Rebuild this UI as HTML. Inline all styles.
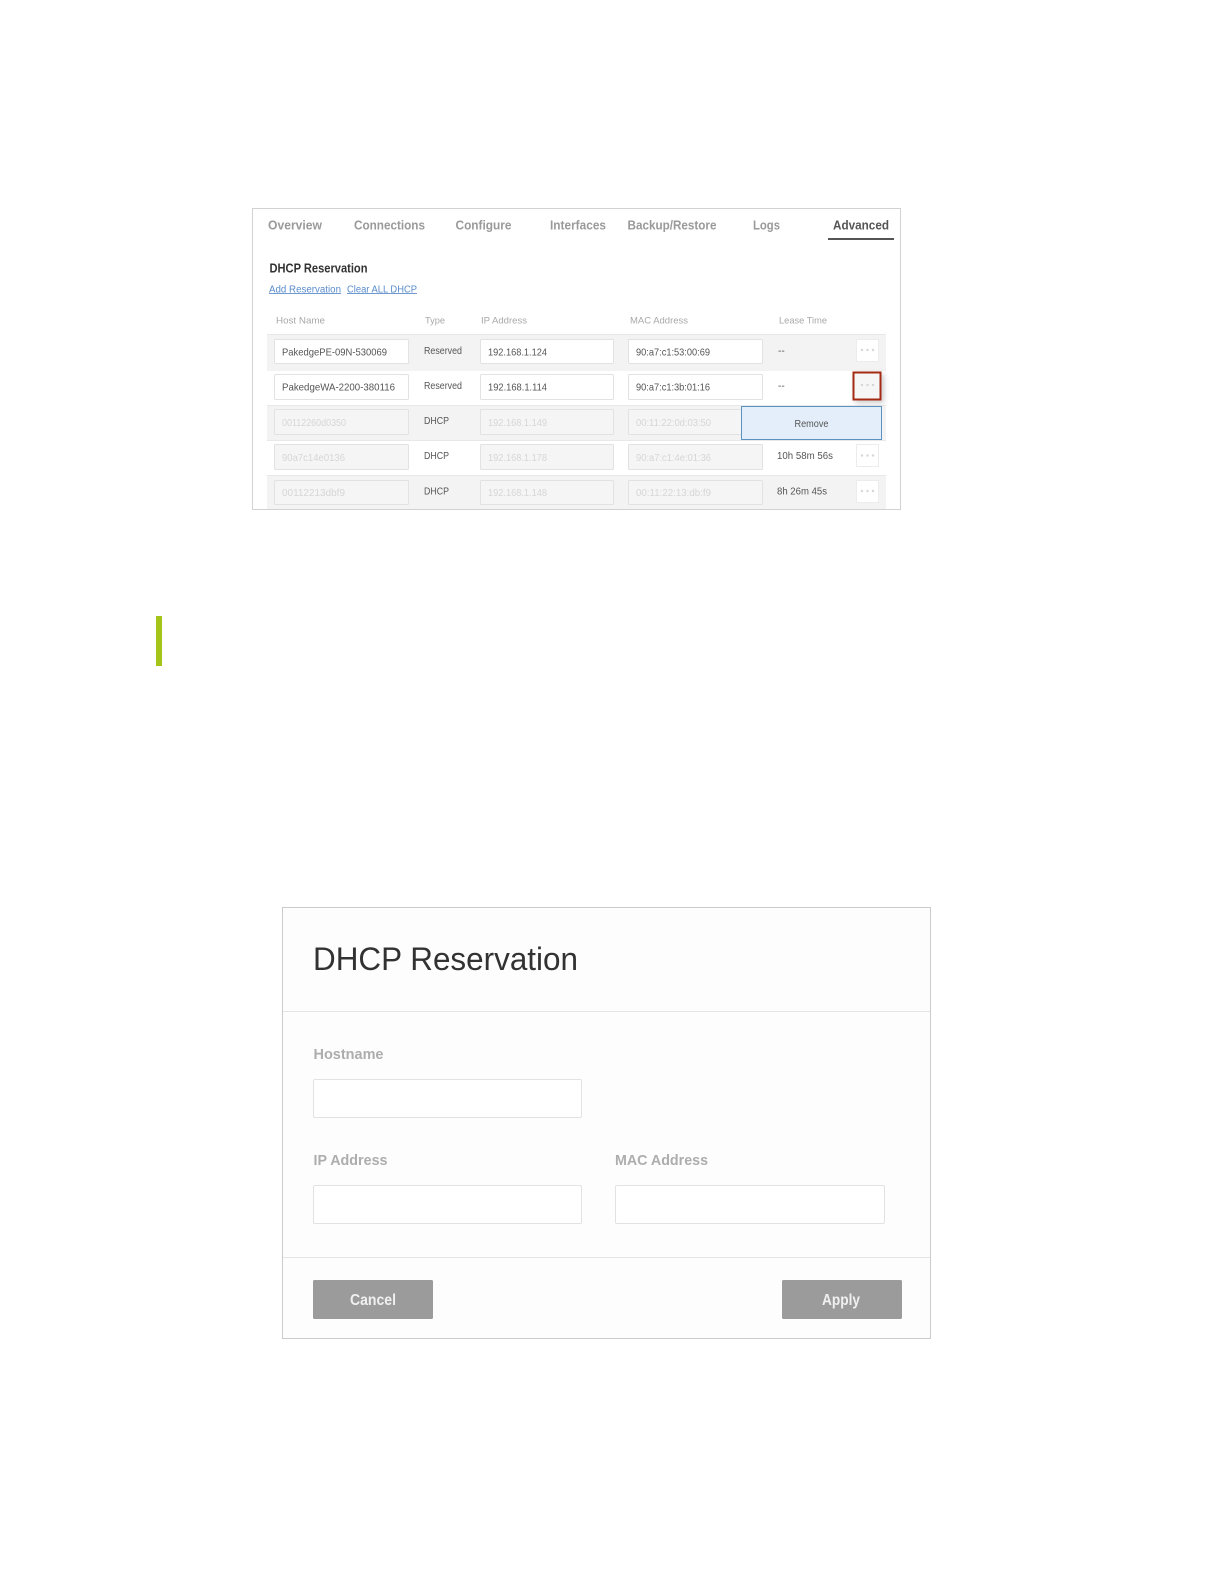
<!DOCTYPE html>
<html><head><meta charset="utf-8"><style>
html,body{margin:0;padding:0;background:#fff;width:1224px;height:1584px;overflow:hidden}
svg{display:block}
text{font-family:"Liberation Sans",sans-serif}
</style></head><body>
<svg width="1224" height="1584" viewBox="0 0 1224 1584" xmlns="http://www.w3.org/2000/svg">
<defs><filter id="s" x="-50%" y="-50%" width="200%" height="200%"><feGaussianBlur stdDeviation="3"/></filter>
<filter id="b" x="-5%" y="-20%" width="110%" height="140%"><feGaussianBlur stdDeviation="0.35"/></filter></defs>
<rect x="252.500" y="208.500" width="648" height="301" fill="#fff" stroke="#d2d2d2"/>
<g font-size="12.500" font-weight="bold" fill="#9a9a9a" filter="url(#b)">
<text x="268" y="229.500" textLength="54" lengthAdjust="spacingAndGlyphs">Overview</text>
<text x="354" y="229.500" textLength="71" lengthAdjust="spacingAndGlyphs">Connections</text>
<text x="455.500" y="229.500" textLength="56" lengthAdjust="spacingAndGlyphs">Configure</text>
<text x="550" y="229.500" textLength="56" lengthAdjust="spacingAndGlyphs">Interfaces</text>
<text x="627.500" y="229.500" textLength="89" lengthAdjust="spacingAndGlyphs">Backup/Restore</text>
<text x="753" y="229.500" textLength="27" lengthAdjust="spacingAndGlyphs">Logs</text>
<text x="833" y="229.500" textLength="56" lengthAdjust="spacingAndGlyphs" fill="#555">Advanced</text>
</g>
<rect x="828" y="238" width="66" height="2" fill="#555"/>
<g filter="url(#b)">
<text x="269.500" y="272.500" font-size="12.500" font-weight="bold" fill="#333" textLength="98" lengthAdjust="spacingAndGlyphs">DHCP Reservation</text>
</g>
<g font-size="10" fill="#5a8ccb" filter="url(#b)">
<text x="269" y="292.500" textLength="72" lengthAdjust="spacingAndGlyphs">Add Reservation</text>
<text x="347" y="292.500" textLength="70" lengthAdjust="spacingAndGlyphs">Clear ALL DHCP</text>
</g>
<rect x="269" y="293" width="72" height="1" fill="#6f9bd2"/>
<rect x="347" y="293" width="70" height="1" fill="#6f9bd2"/>
<g font-size="9.500" fill="#a8a8a8" filter="url(#b)">
<text x="276" y="323.500" textLength="49" lengthAdjust="spacingAndGlyphs">Host Name</text>
<text x="425" y="323.500" textLength="20" lengthAdjust="spacingAndGlyphs">Type</text>
<text x="481" y="323.500" textLength="46" lengthAdjust="spacingAndGlyphs">IP Address</text>
<text x="630" y="323.500" textLength="58" lengthAdjust="spacingAndGlyphs">MAC Address</text>
<text x="779" y="323.500" textLength="48" lengthAdjust="spacingAndGlyphs">Lease Time</text>
</g>
<rect x="267" y="334" width="619" height="37" fill="#f3f3f3"/>
<rect x="267" y="405" width="619" height="36" fill="#f3f3f3"/>
<rect x="267" y="475" width="619" height="34" fill="#f3f3f3"/>
<rect x="267" y="405" width="619" height="1" fill="#e8e8e8"/>
<rect x="267" y="440" width="619" height="1" fill="#e8e8e8"/>
<rect x="267" y="475" width="619" height="1" fill="#e8e8e8"/>
<rect x="267" y="334" width="619" height="1" fill="#e8e8e8"/>
<g fill="#fff" stroke="#e2e2e2">
<rect x="274.500" y="339.500" width="134" height="24" rx="1"/><rect x="480.500" y="339.500" width="133" height="24" rx="1"/><rect x="628.500" y="339.500" width="134" height="24" rx="1"/>
<rect x="274.500" y="374.500" width="134" height="25" rx="1"/><rect x="480.500" y="374.500" width="133" height="25" rx="1"/><rect x="628.500" y="374.500" width="134" height="25" rx="1"/>
</g>
<g fill="#f5f5f5" stroke="#e2e2e2">
<rect x="274.500" y="409.500" width="134" height="25" rx="1"/><rect x="480.500" y="409.500" width="133" height="25" rx="1"/><rect x="628.500" y="409.500" width="134" height="25" rx="1"/>
<rect x="274.500" y="444.500" width="134" height="25" rx="1"/><rect x="480.500" y="444.500" width="133" height="25" rx="1"/><rect x="628.500" y="444.500" width="134" height="25" rx="1"/>
<rect x="274.500" y="480.500" width="134" height="24" rx="1"/><rect x="480.500" y="480.500" width="133" height="24" rx="1"/><rect x="628.500" y="480.500" width="134" height="24" rx="1"/>
</g>
<g font-size="10.500" fill="#555" filter="url(#b)">
<text x="282" y="355.500" textLength="105" lengthAdjust="spacingAndGlyphs">PakedgePE-09N-530069</text>
<text x="282" y="390.500" textLength="113" lengthAdjust="spacingAndGlyphs">PakedgeWA-2200-380116</text>
<text x="488" y="355.500" textLength="59" lengthAdjust="spacingAndGlyphs">192.168.1.124</text>
<text x="488" y="390.500" textLength="59" lengthAdjust="spacingAndGlyphs">192.168.1.114</text>
<text x="636" y="355.500" textLength="74" lengthAdjust="spacingAndGlyphs">90:a7:c1:53:00:69</text>
<text x="636" y="390.500" textLength="74" lengthAdjust="spacingAndGlyphs">90:a7:c1:3b:01:16</text>
</g>
<g font-size="10" fill="#d6d6d6" filter="url(#b)">
<text x="282" y="426" textLength="64" lengthAdjust="spacingAndGlyphs">00112260d0350</text>
<text x="282" y="461" textLength="63" lengthAdjust="spacingAndGlyphs">90a7c14e0136</text>
<text x="282" y="496" textLength="63" lengthAdjust="spacingAndGlyphs">00112213dbf9</text>
<text x="488" y="426" textLength="59" lengthAdjust="spacingAndGlyphs">192.168.1.149</text>
<text x="488" y="461" textLength="59" lengthAdjust="spacingAndGlyphs">192.168.1.178</text>
<text x="488" y="496" textLength="59" lengthAdjust="spacingAndGlyphs">192.168.1.148</text>
<text x="636" y="426" textLength="75" lengthAdjust="spacingAndGlyphs">00:11:22:0d:03:50</text>
<text x="636" y="461" textLength="75" lengthAdjust="spacingAndGlyphs">90:a7:c1:4e:01:36</text>
<text x="636" y="496" textLength="75" lengthAdjust="spacingAndGlyphs">00:11:22:13:db:f9</text>
</g>
<g font-size="10" fill="#555" filter="url(#b)">
<text x="424" y="354" textLength="38" lengthAdjust="spacingAndGlyphs">Reserved</text>
<text x="424" y="389" textLength="38" lengthAdjust="spacingAndGlyphs">Reserved</text>
<text x="424" y="424" textLength="25" lengthAdjust="spacingAndGlyphs">DHCP</text>
<text x="424" y="459" textLength="25" lengthAdjust="spacingAndGlyphs">DHCP</text>
<text x="424" y="494.500" textLength="25" lengthAdjust="spacingAndGlyphs">DHCP</text>
<text x="778" y="354">--</text>
<text x="778" y="389">--</text>
<text x="777" y="459" textLength="56" lengthAdjust="spacingAndGlyphs">10h 58m 56s</text>
<text x="777" y="494.500" textLength="50" lengthAdjust="spacingAndGlyphs">8h 26m 45s</text>
</g>
<g fill="#fff" stroke="#ececec">
<rect x="856.500" y="339.500" width="22" height="22"/>
<rect x="856.500" y="444.500" width="22" height="22"/>
<rect x="856.500" y="480.500" width="22" height="22"/>
</g>
<rect x="855" y="374" width="29" height="29" fill="#000" opacity=".2" filter="url(#s)"/>
<rect x="853.500" y="372.500" width="27" height="27" fill="#f6f6f6" stroke="#a52a14" stroke-width="2"/>
<g fill="#d6d6d6">
<circle cx="862" cy="350" r="1.200"/><circle cx="867.500" cy="350" r="1.200"/><circle cx="873" cy="350" r="1.200"/>
<circle cx="862" cy="385" r="1.200"/><circle cx="867.500" cy="385" r="1.200"/><circle cx="873" cy="385" r="1.200"/>
<circle cx="862" cy="455.500" r="1.200"/><circle cx="867.500" cy="455.500" r="1.200"/><circle cx="873" cy="455.500" r="1.200"/>
<circle cx="862" cy="491" r="1.200"/><circle cx="867.500" cy="491" r="1.200"/><circle cx="873" cy="491" r="1.200"/>
</g>
<rect x="741.500" y="406.500" width="140" height="33" fill="#e3eefa" stroke="#5a93c0"/>
<text x="794.500" y="427" font-size="10.500" fill="#555" textLength="34" lengthAdjust="spacingAndGlyphs" filter="url(#b)">Remove</text>

<rect x="156" y="616" width="6" height="50" fill="#a4c41a"/>

<rect x="282.500" y="907.500" width="648" height="431" fill="#fdfdfd" stroke="#cbcbcb"/>
<text x="313" y="970" font-size="32" fill="#333" textLength="265" lengthAdjust="spacingAndGlyphs" filter="url(#b)">DHCP Reservation</text>
<rect x="283" y="1011" width="647" height="1" fill="#e4e4e4"/>
<rect x="283" y="1257" width="647" height="1" fill="#e4e4e4"/>
<g font-size="15" font-weight="bold" fill="#adadad" filter="url(#b)">
<text x="313.500" y="1059" textLength="70" lengthAdjust="spacingAndGlyphs">Hostname</text>
<text x="313.500" y="1165" textLength="74" lengthAdjust="spacingAndGlyphs">IP Address</text>
<text x="615" y="1165" textLength="93" lengthAdjust="spacingAndGlyphs">MAC Address</text>
</g>
<g fill="#fff" stroke="#e2e2e2">
<rect x="313.500" y="1079.500" width="268" height="38" rx="1.500"/>
<rect x="313.500" y="1185.500" width="268" height="38" rx="1.500"/>
<rect x="615.500" y="1185.500" width="269" height="38" rx="1.500"/>
</g>
<rect x="313" y="1280" width="120" height="39" rx="1.500" fill="#9b9b9b"/>
<rect x="782" y="1280" width="120" height="39" rx="1.500" fill="#9b9b9b"/>
<g font-size="16" font-weight="bold" fill="#f0f0f0" filter="url(#b)">
<text x="350" y="1305" textLength="46" lengthAdjust="spacingAndGlyphs">Cancel</text>
<text x="822" y="1305" textLength="38" lengthAdjust="spacingAndGlyphs">Apply</text>
</g>
</svg>
</body></html>
